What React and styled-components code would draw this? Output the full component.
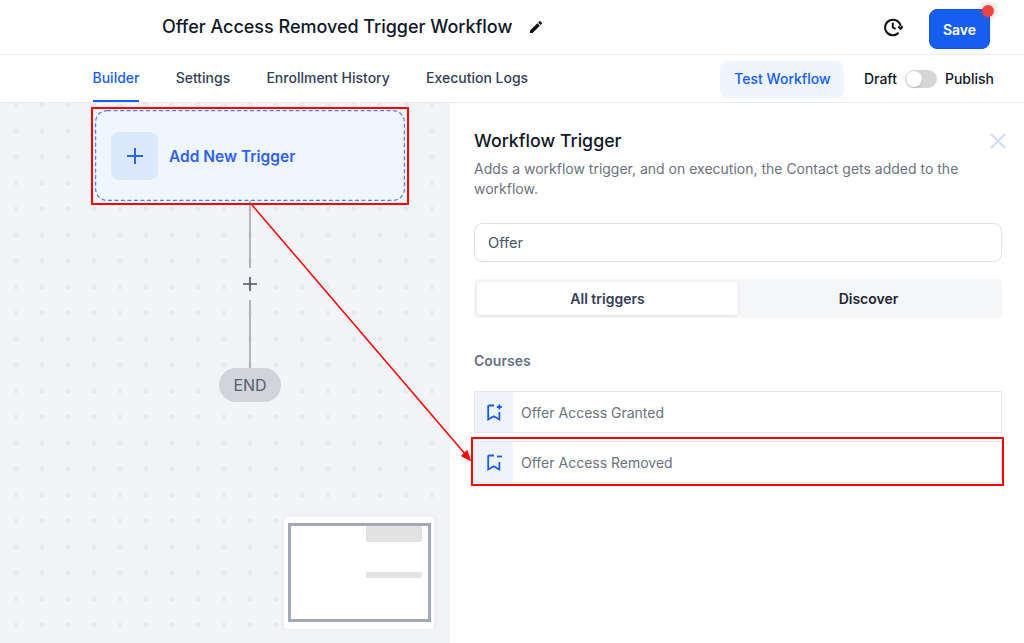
import React from 'react';
import styled, { createGlobalStyle } from 'styled-components';
import { MdEdit } from 'react-icons/md';

const blue = '#155eef';
const ink = '#101828';
const grey = '#6b7280';

const GlobalStyle = createGlobalStyle`
  html, body {
    margin: 0;
    padding: 0;
    background: #fff;
  }
  body {
    font-family: Inter, "Noto Sans", sans-serif;
    color: ${ink};
    overflow: hidden;
  }
  * {
    box-sizing: border-box;
  }
`;

const Page = styled.div`
  position: relative;
  width: 1024px;
  height: 643px;
  display: flex;
  flex-direction: column;
  overflow: hidden;
`;

const Header = styled.header`
  height: 55px;
  flex: none;
  display: flex;
  align-items: center;
  padding: 0 34px 1px 162px;
  border-bottom: 1px solid #e9eaec;
`;

const Title = styled.h1`
  margin: 0;
  font-size: 18px;
  line-height: 26px;
  font-weight: 500;
  letter-spacing: -0.02px;
  color: #101828;
`;

const EditButton = styled.span`
  display: flex;
  margin-left: 16px;
  font-size: 16px;
  color: #111;
`;

const HeaderActions = styled.div`
  margin-left: auto;
  display: flex;
  align-items: center;
  gap: 26px;
`;

const HistoryIcon = styled.svg`
  display: block;
  width: 20px;
  height: 20px;
`;

const SaveButton = styled.button`
  position: relative;
  width: 61px;
  height: 40px;
  margin-top: 5px;
  border: 1px solid #0f56e0;
  border-radius: 8px;
  background: ${blue};
  color: #fff;
  font: 600 14px Inter, sans-serif;
  padding: 0;
`;

const Badge = styled.span`
  position: absolute;
  top: -5px;
  right: -5px;
  width: 12px;
  height: 12px;
  border-radius: 50%;
  background: #ef4444;
  box-shadow: 0 0 0 4px rgba(239, 68, 68, 0.1);
`;

const NavBar = styled.nav`
  height: 48px;
  flex: none;
  display: flex;
  align-items: stretch;
  padding: 0 30px 0 92.5px;
  border-bottom: 1px solid #e9eaec;
`;

const Tabs = styled.div`
  display: flex;
  gap: 36.2px;
`;

const Tab = styled.span`
  display: flex;
  align-items: center;
  height: 47px;
  padding-bottom: 1px;
  font-size: 14px;
  font-weight: 500;
  color: ${({ $active }) => ($active ? blue : '#344054')};
  border-bottom: 2px solid ${({ $active }) => ($active ? blue : 'transparent')};
`;

const NavActions = styled.div`
  margin-left: auto;
  display: flex;
  align-items: center;
  font-size: 14px;
  font-weight: 500;
  color: #101828;
`;

const TestButton = styled.button`
  width: 124px;
  height: 37px;
  margin: 2px 20px 0 0;
  border: 0;
  border-radius: 8px;
  background: #eff4ff;
  color: ${blue};
  font: 500 14px Inter, sans-serif;
  padding: 0 0 2px 1px;
`;

const Toggle = styled.span`
  position: relative;
  width: 32px;
  height: 18px;
  margin: 0 8px;
  border-radius: 9px;
  background: #d6d6d6;
`;

const ToggleKnob = styled.span`
  position: absolute;
  top: 1px;
  left: 1px;
  width: 16px;
  height: 16px;
  border-radius: 50%;
  background: #fff;
  box-shadow: 0 1px 2px rgba(16, 24, 40, 0.2);
`;

const Main = styled.main`
  flex: 1;
  display: flex;
  min-height: 0;
`;

const Canvas = styled.section`
  position: relative;
  width: 450px;
  flex: none;
  padding: 7px 0 0 95px;
  background-color: #f2f4f8;
  background-image: radial-gradient(circle, #e9eaed 2.2px, transparent 3px);
  background-size: 26px 26px;
  background-position: 3px -11px;
`;

const Flow = styled.div`
  width: 310px;
  display: flex;
  flex-direction: column;
  align-items: center;
`;

const TriggerNode = styled.div`
  position: relative;
  align-self: stretch;
  height: 91px;
  display: flex;
  align-items: center;
  gap: 11px;
  padding-left: 16px;
  border-radius: 12px;
  background: #eff6ff;
`;

const DashedOutline = styled.svg`
  position: absolute;
  inset: 0;
  width: 310px;
  height: 91px;
`;

const TriggerIcon = styled.span`
  width: 47px;
  height: 48px;
  display: flex;
  align-items: center;
  justify-content: center;
  border-radius: 8px;
  background: #dbe9fe;
  color: #2f62e8;
`;

const TriggerLabel = styled.span`
  padding-top: 2px;
  font-size: 15.5px;
  font-weight: 600;
  color: #2f62e8;
`;

const Connector = styled.div`
  width: 2px;
  height: ${({ $h }) => $h}px;
  background: #b2b4b9;
`;

const AddStep = styled.div`
  height: 32px;
  display: flex;
  align-items: center;
  color: #475467;
`;

const EndPill = styled.div`
  width: 62px;
  height: 34px;
  display: flex;
  align-items: center;
  justify-content: center;
  border-radius: 17px;
  background: #d1d4da;
  color: #56606f;
  font-size: 16px;
`;

const MiniMap = styled.div`
  position: absolute;
  left: 284px;
  top: 414px;
  width: 150px;
  height: 112px;
  padding: 6px 3px 7px 4px;
  border-radius: 4px;
  background: #fff;
  box-shadow: 0 0 6px rgba(16, 24, 40, 0.06);
`;

const MiniFrame = styled.div`
  height: 99px;
  display: flex;
  flex-direction: column;
  align-items: flex-end;
  padding: 0 6px 0 0;
  border: 3px solid #a1aabd;
`;

const MiniNode = styled.div`
  width: 56px;
  height: ${({ $h }) => $h}px;
  margin-top: ${({ $top }) => $top}px;
  border-radius: 2px;
  background: #e2e2e2;
`;

const Panel = styled.aside`
  flex: 1;
  position: relative;
  padding: 26px 22px 0 24px;
  background: #fff;
`;

const PanelTitle = styled.h2`
  margin: 0;
  font-size: 17.8px;
  line-height: 24px;
  font-weight: 500;
  color: #101828;
`;

const CloseIcon = styled.svg`
  position: absolute;
  top: 30px;
  right: 18px;
  width: 16px;
  height: 16px;
`;

const Description = styled.p`
  margin: 6px 0 0;
  width: 510px;
  font-size: 14px;
  line-height: 20px;
  color: ${grey};
`;

const SearchBox = styled.div`
  height: 39px;
  margin-top: 24px;
  display: flex;
  align-items: center;
  padding-left: 13px;
  border: 1px solid #e0e0e8;
  border-radius: 8px;
  font-size: 14.6px;
  color: #475467;
`;

const Segments = styled.div`
  height: 39px;
  margin-top: 17px;
  display: grid;
  grid-template-columns: 261px 1fr;
  padding: 3px;
  border-radius: 4px;
  background: #f5f6f8;
`;

const Segment = styled.div`
  display: flex;
  align-items: center;
  justify-content: center;
  border-radius: 3px;
  font-size: 14px;
  font-weight: 600;
  color: ${({ $active }) => ($active ? '#344054' : '#1d2433')};
  background: ${({ $active }) => ($active ? '#fff' : 'transparent')};
  box-shadow: ${({ $active }) => ($active ? '0 1px 3px rgba(16, 24, 40, 0.1)' : 'none')};
`;

const SectionLabel = styled.h3`
  margin: 35px 0 0;
  font-size: 14px;
  line-height: 16px;
  font-weight: 600;
  color: #667085;
`;

const TriggerList = styled.div`
  margin-top: 22px;
  display: flex;
  flex-direction: column;
  gap: 8px;
`;

const TriggerRow = styled.div`
  height: 42px;
  display: flex;
  align-items: center;
  border: 1px solid #e6e7eb;
  font-size: 14px;
  color: ${grey};
`;

const RowIcon = styled.span`
  width: 38px;
  align-self: stretch;
  flex: none;
  display: flex;
  align-items: center;
  justify-content: center;
  margin-right: 8px;
  background: #eef3fd;
  color: ${blue};
`;

const Annotations = styled.svg`
  position: absolute;
  inset: 0;
  width: 1024px;
  height: 643px;
  pointer-events: none;
`;

const BookmarkIcon = ({ minus }) => (
  <svg width="18" height="18" viewBox="0 0 18 18" fill="none" stroke="currentColor" strokeWidth="1.8">
    <path d="M9 2.5H4.2a1 1 0 0 0-1 1v13l5.6-3.2 5.6 3.2V9" />
    {minus ? <path d="M12 3.5h5" /> : <path d="M11.8 4h5M14.3 1.5v5" />}
  </svg>
);

const triggers = [
  { label: 'Offer Access Granted', minus: false },
  { label: 'Offer Access Removed', minus: true },
];

const App = () => (
  <Page>
    <GlobalStyle />
    <Header>
      <Title>Offer Access Removed Trigger Workflow</Title>
      <EditButton>
        <MdEdit />
      </EditButton>
      <HeaderActions>
        <HistoryIcon viewBox="0 0 20 20" fill="none" stroke="#111" strokeWidth="2">
          <path d="M17.6 9.2A7.8 7.8 0 1 0 15.6 15.8" />
          <path d="M9.8 5.8v4.6l2.8 1.6" />
          <path d="M15.2 9.4l2.5 2.3 2-2.5" />
        </HistoryIcon>
        <SaveButton>
          Save
          <Badge />
        </SaveButton>
      </HeaderActions>
    </Header>
    <NavBar>
      <Tabs>
        <Tab $active>Builder</Tab>
        <Tab>Settings</Tab>
        <Tab>Enrollment History</Tab>
        <Tab>Execution Logs</Tab>
      </Tabs>
      <NavActions>
        <TestButton>Test Workflow</TestButton>
        Draft
        <Toggle>
          <ToggleKnob />
        </Toggle>
        Publish
      </NavActions>
    </NavBar>
    <Main>
      <Canvas>
        <Flow>
          <TriggerNode>
            <DashedOutline viewBox="0 0 310 91" fill="none" stroke="#4a80f0" strokeWidth="1.2" strokeDasharray="4 2.5">
              <rect x="0.6" y="0.6" width="308.8" height="89.8" rx="11.5" />
            </DashedOutline>
            <TriggerIcon>
              <svg width="20" height="20" viewBox="0 0 20 20" stroke="currentColor" strokeWidth="2">
                <path d="M10 2v16M2 10h16" />
              </svg>
            </TriggerIcon>
            <TriggerLabel>Add New Trigger</TriggerLabel>
          </TriggerNode>
          <Connector $h={67} />
          <AddStep>
            <svg width="16" height="16" viewBox="0 0 16 16" stroke="currentColor" strokeWidth="1.6">
              <path d="M8 1v14M1 8h14" />
            </svg>
          </AddStep>
          <Connector $h={68} />
          <EndPill>END</EndPill>
        </Flow>
        <MiniMap>
          <MiniFrame>
            <MiniNode $h={16} $top={0} />
            <MiniNode $h={6} $top={30} />
          </MiniFrame>
        </MiniMap>
      </Canvas>
      <Panel>
        <PanelTitle>Workflow Trigger</PanelTitle>
        <CloseIcon viewBox="0 0 16 16" stroke="#d0dbfb" strokeWidth="2">
          <path d="M1 1l14 14M15 1L1 15" />
        </CloseIcon>
        <Description>
          Adds a workflow trigger, and on execution, the Contact gets added to the workflow.
        </Description>
        <SearchBox>Offer</SearchBox>
        <Segments>
          <Segment $active>All triggers</Segment>
          <Segment>Discover</Segment>
        </Segments>
        <SectionLabel>Courses</SectionLabel>
        <TriggerList>
          {triggers.map((item) => (
            <TriggerRow key={item.label}>
              <RowIcon>
                <BookmarkIcon minus={item.minus} />
              </RowIcon>
              {item.label}
            </TriggerRow>
          ))}
        </TriggerList>
      </Panel>
    </Main>
    <Annotations viewBox="0 0 1024 643" fill="none" stroke="#ff0000" strokeWidth="2">
      <rect x="92" y="108" width="316" height="96" />
      <rect x="472" y="438" width="531" height="47" />
      <path d="M252 205L466 455" strokeWidth="1.5" />
      <path d="M470.5 460.5L461.5 456L467 450.5Z" fill="#ff0000" strokeWidth="1" />
    </Annotations>
  </Page>
);

export default App;
